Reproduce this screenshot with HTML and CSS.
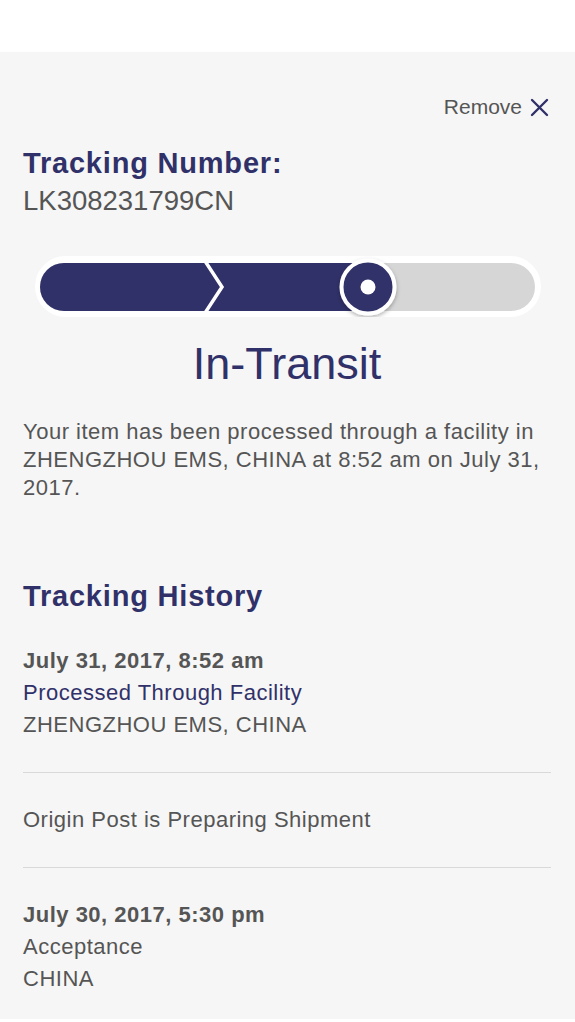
FILE: index.html
```html
<!DOCTYPE html>
<html lang="en">
<head>
    <meta charset="UTF-8">
    <meta name="viewport" content="width=device-width, initial-scale=1.0">
    <title>Tracking</title>
    <link rel="stylesheet" href="styles.css">
</head>
<body>
    <div class="topbar"></div>

    <main class="card">
        <div class="remove-row">
            <span class="remove-text">Remove</span>
            <svg class="remove-icon" width="19" height="19" viewBox="0 0 19 19">
                <path d="M2 2 L17 17 M17 2 L2 17" stroke="#31316a" stroke-width="2.4" fill="none" stroke-linecap="round"/>
            </svg>
        </div>

        <h1 class="label">Tracking Number:</h1>
        <p class="number">LK308231799CN</p>

        <div class="progress">
            <svg width="506" height="61" viewBox="0 0 506 61">
                <defs>
                    <filter id="knob-shadow" x="-30%" y="-30%" width="160%" height="170%">
                        <feDropShadow dx="0" dy="2" stdDeviation="2" flood-color="#000" flood-opacity="0.3"/>
                    </filter>
                </defs>
                <rect x="0" y="0" width="506" height="61" rx="30.5" fill="#ffffff"/>
                <rect x="5" y="7" width="495" height="48" rx="24" fill="#d6d6d6"/>
                <path d="M29 7 H333 V55 H29 A24 24 0 0 1 29 7 Z" fill="#31316a"/>
                <polyline points="170,5 187,31 170,57" stroke="#ffffff" stroke-width="3.5" fill="none"/>
                <circle cx="333" cy="31" r="26.5" fill="#31316a" stroke="#ffffff" stroke-width="4" filter="url(#knob-shadow)"/>
                <circle cx="333" cy="31" r="7.5" fill="#ffffff"/>
            </svg>
        </div>

        <h2 class="status">In-Transit</h2>

        <p class="message">Your item has been processed through a facility in ZHENGZHOU EMS, CHINA at 8:52 am on July 31, 2017.</p>

        <h1 class="label history-title">Tracking History</h1>

        <ul class="history">
            <li class="event">
                <span class="event-date">July 31, 2017, 8:52 am</span>
                <span class="event-status current">Processed Through Facility</span>
                <span class="event-place">ZHENGZHOU EMS, CHINA</span>
            </li>
            <li class="event">
                <span class="event-status">Origin Post is Preparing Shipment</span>
            </li>
            <li class="event">
                <span class="event-date">July 30, 2017, 5:30 pm</span>
                <span class="event-status">Acceptance</span>
                <span class="event-place">CHINA</span>
            </li>
        </ul>
    </main>
</body>
</html>
```

FILE: styles.css
```css
:root {
    --navy: #31316a;
    --texto: #555555;
    --fondo: #f6f6f6;
    --linea: #d9d9d9;
}

body {
    margin: 0;
    padding: 0;
    background-color: #ffffff;
    font-family: "Liberation Sans", Arial, sans-serif;
    color: var(--texto);
}

.topbar {
    height: 52px;
    background-color: #ffffff;
}

.card {
    background-color: var(--fondo);
    height: 967px;
    box-sizing: border-box;
    padding: 43px 24px 0 23px;
    box-shadow: 0 1px 2px rgba(0, 0, 0, 0.12);
    display: flex;
    flex-direction: column;
}

.remove-row {
    display: flex;
    justify-content: flex-end;
    align-items: center;
    gap: 8px;
    height: 24px;
    padding-right: 2px;
}

.remove-text {
    font-size: 21px;
    line-height: 24px;
}

.remove-icon {
    display: block;
}

.label {
    margin: 28px 0 0;
    font-size: 29px;
    line-height: 32px;
    font-weight: bold;
    color: var(--navy);
    letter-spacing: 0.8px;
}

.number {
    margin: 6px 0 0;
    font-size: 27.5px;
    line-height: 32px;
}

.progress {
    margin: 39px 0 0 12px;
    height: 61px;
}

.progress svg {
    display: block;
}

.status {
    margin: 21px 0 0;
    text-align: center;
    font-size: 45px;
    line-height: 52px;
    font-weight: normal;
    color: var(--navy);
}

.message {
    margin: 28px 0 0;
    font-size: 22px;
    line-height: 28px;
    letter-spacing: 0.5px;
}

.history-title {
    margin-top: 78px;
}

.history {
    list-style: none;
    margin: 2px 0 0;
    padding: 0;
}

.event {
    display: flex;
    flex-direction: column;
    padding: 31px 0;
    font-size: 22px;
    line-height: 32px;
    letter-spacing: 0.5px;
    border-bottom: 1px solid var(--linea);
}

.event:last-child {
    border-bottom: none;
}

.event-date {
    font-weight: bold;
}

.event-status.current {
    color: var(--navy);
}
```
